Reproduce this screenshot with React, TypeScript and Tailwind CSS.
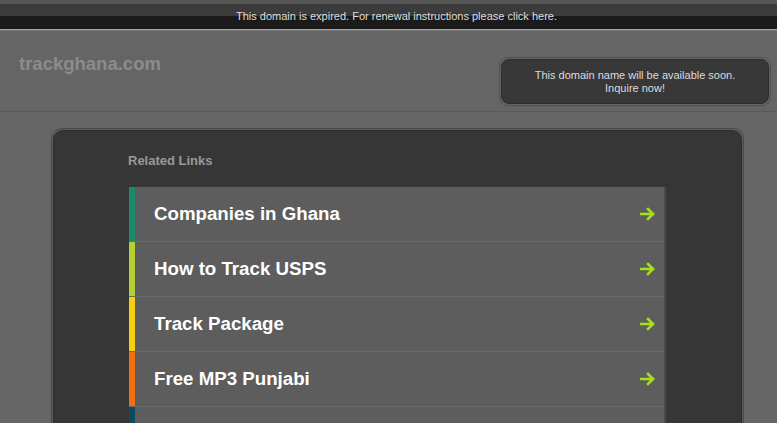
import { FC } from 'react'

interface LinkItem {
  label: string
  color: string
}

// fifth row is cut off by the window edge, its label isn't visible
const links: LinkItem[] = [
  { label: 'Companies in Ghana', color: 'bg-[#1b8a6b]' },
  { label: 'How to Track USPS', color: 'bg-[#b3d134]' },
  { label: 'Track Package', color: 'bg-[#f4d20e]' },
  { label: 'Free MP3 Punjabi', color: 'bg-[#f26f0f]' },
  { label: '', color: 'bg-[#0d4a5c]' }
]

const Arrow: FC = () => (
  <svg width="16" height="14" viewBox="0 0 16 14" className="shrink-0">
    <path
      d="M1 7h12M8 2l5 5-5 5"
      stroke="#a6e01a"
      strokeWidth="2.6"
      fill="none"
      strokeLinecap="square"
      strokeLinejoin="miter"
    />
  </svg>
)

const App: FC = () => {
  return (
    <div className="w-[777px] h-[423px] overflow-hidden bg-[#656565] font-['Liberation_Sans',Arial,sans-serif]">
      {/* Expired bar */}
      <div className="h-[4px] bg-[#575757] border-b border-[#4d5a5a]" />
      <div className="h-[25px] pl-[16px] bg-[linear-gradient(#3b3b3b_0,#3b3b3b_48%,#1b1b1b_48%,#1b1b1b_100%)] flex items-center justify-center">
        <span className="text-[11px] text-[#dedede] leading-none">
          This domain is expired. For renewal instructions please click here.
        </span>
      </div>
      <div className="h-[1px] bg-[#a3a3a3]" />
      <div className="h-[1px] bg-[#767676]" />

      {/* Header */}
      <div className="h-[81px] flex justify-between border-b border-[#595959]">
        <div className="pl-[19px] pt-[24px] text-[18.5px] font-bold text-[#8c8c8c] leading-none">
          trackghana.com
        </div>
        <div className="pt-[26px] pr-[6px]">
          <div className="w-[272px] h-[49px] rounded-[9px] border border-[#505050] p-[1px]">
            <div className="w-full h-full rounded-[8px] border border-[#2c2c2c] bg-[#383838] flex flex-col items-center justify-center text-[11px] leading-[13px] text-[#dcdcdc]">
              <span>This domain name will be available soon.</span>
              <span>Inquire now!</span>
            </div>
          </div>
        </div>
      </div>

      {/* Main panel */}
      <div className="pt-[16px] pl-[51px]">
        <div className="w-[693px] h-[320px] rounded-[11px] border border-[#4a4a4a] p-[1px] bg-[#5c5c5c]">
          <div className="w-full h-full rounded-[10px] border border-[#2e2e2e] bg-[#363636] pl-[74px] pt-[23px]">
            <div className="text-[13px] font-bold text-[#999999] leading-none mb-[20px]">
              Related Links
            </div>
            <div className="ml-[1px] w-[537px] flex flex-col border-r-2 border-[#4a4a4a]">
              {links.map((link, index) => (
                <div
                  key={index}
                  className="h-[55px] shrink-0 flex bg-[#5d5d5d] border-b border-[#6a6a6a]"
                >
                  <div className={`w-[6px] ${link.color}`} />
                  {link.label && (
                    <div className="flex-1 flex items-center justify-between pl-[19px] pr-[8px]">
                      <span className="text-[18.7px] font-bold text-white">
                        {link.label}
                      </span>
                      <Arrow />
                    </div>
                  )}
                </div>
              ))}
            </div>
          </div>
        </div>
      </div>
    </div>
  )
}

export default App
